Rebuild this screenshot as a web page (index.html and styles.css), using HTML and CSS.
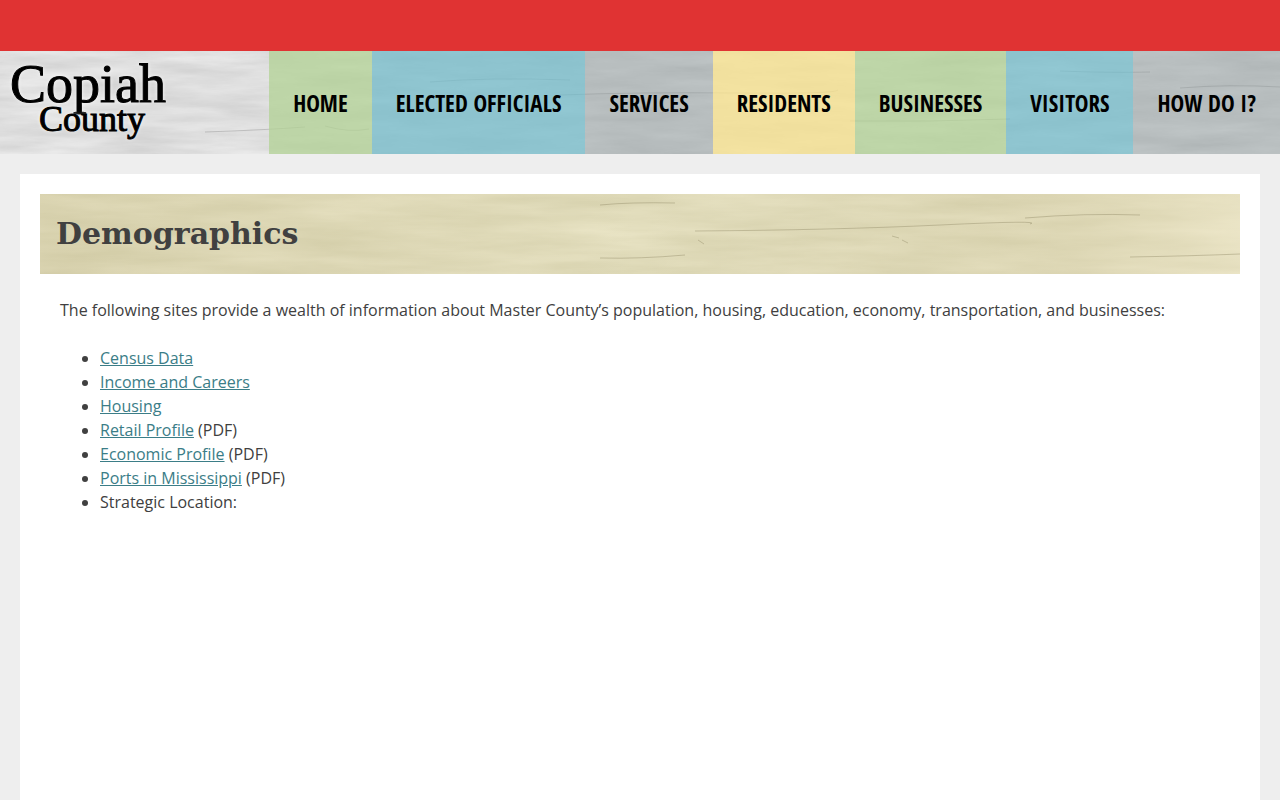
FILE: index.html
```
<!DOCTYPE html>
<html lang="en">
<head>
    <meta charset="UTF-8">
    <meta name="viewport" content="width=device-width, initial-scale=1.0">
    <title>Demographics | Copiah County</title>
    <link rel="stylesheet" href="styles.css">
</head>
<body>
    <div class="top-bar"></div>

    <header class="site-header">
        <svg class="wood" aria-hidden="true">
            <filter id="grain" x="0" y="0" width="100%" height="100%" color-interpolation-filters="sRGB">
                <feTurbulence type="fractalNoise" baseFrequency="0.01 0.07" numOctaves="6" seed="7"/>
                <feColorMatrix values="0.16 0 0 0 0.79  0.16 0 0 0 0.79  0.16 0 0 0 0.79  0 0 0 0 1"/>
            </filter>
            <rect width="100%" height="100%" filter="url(#grain)"/>
            <g fill="none" stroke="#555" stroke-opacity="0.25">
                <path d="M205 81 q60 -2 100 -5 M325 75 q24 7 44 3 M560 44 q80 -3 178 -2 t100 -3 M850 70 q80 1 160 -2"/>
                <path d="M430 31 q60 -5 140 -2 M1060 20 q50 2 90 1 M1180 37 q50 -4 100 -1"/>
            </g>
        </svg>
        <a class="logo" href="#">
            <span class="logo-name">Copiah</span>
            <span class="logo-type">County</span>
        </a>
        <nav class="main-nav">
            <a class="green" href="#">Home</a>
            <a class="blue" href="#">Elected Officials</a>
            <a class="gray" href="#">Services</a>
            <a class="yellow" href="#">Residents</a>
            <a class="green" href="#">Businesses</a>
            <a class="blue" href="#">Visitors</a>
            <a class="gray" href="#">How Do I?</a>
        </nav>
    </header>

    <main class="content">
        <div class="banner">
            <svg class="wood" aria-hidden="true">
                <filter id="grain-tan" x="0" y="0" width="100%" height="100%" color-interpolation-filters="sRGB">
                    <feTurbulence type="fractalNoise" baseFrequency="0.008 0.07" numOctaves="6" seed="12"/>
                    <feColorMatrix values="0.08 0 0 0 0.84  0.08 0 0 0 0.82  0.1 0 0 0 0.68  0 0 0 0 1"/>
                </filter>
                <linearGradient id="shade">
                    <stop offset="0" stop-color="#b8ad80" stop-opacity="0.2"/>
                    <stop offset="0.5" stop-color="#b8ad80" stop-opacity="0"/>
                    <stop offset="0.72" stop-color="#b8ad80" stop-opacity="0.1"/>
                    <stop offset="1" stop-color="#f4ecd0" stop-opacity="0.4"/>
                </linearGradient>
                <rect width="100%" height="100%" filter="url(#grain-tan)"/>
                <rect width="100%" height="100%" fill="url(#shade)"/>
                <g fill="none" stroke="#8d8461" stroke-opacity="0.4">
                    <path d="M655 37 q140 -1 245 -6 t90 -1 M985 24 q60 -5 115 -3 M560 11 q30 -3 75 -2 M560 64 q40 1 85 -3 M1090 63 q60 -1 110 -3"/>
                    <path d="M658 46 l6 4 M852 42 l7 2 M862 46 l6 3"/>
                </g>
            </svg>
            <h1>Demographics</h1>
        </div>

        <div class="text">
            <p>The following sites provide a wealth of information about Master County’s population, housing, education, economy, transportation, and businesses:</p>
            <ul>
                <li><a href="#">Census Data</a></li>
                <li><a href="#">Income and Careers</a></li>
                <li><a href="#">Housing</a></li>
                <li><a href="#">Retail Profile</a> (PDF)</li>
                <li><a href="#">Economic Profile</a> (PDF)</li>
                <li><a href="#">Ports in Mississippi</a> (PDF)</li>
                <li>Strategic Location:</li>
            </ul>
        </div>
    </main>
</body>
</html>
```
FILE: styles.css
```
* {
    box-sizing: border-box;
}
body {
    margin: 0;
    min-height: 100vh;
    display: flex;
    flex-direction: column;
    background-color: #eee;
    color: #404040;
    font-family: "Open Sans", sans-serif;
    font-size: 16px;
    line-height: 24px;
}
.top-bar {
    height: 51px;
    background-color: #e03333;
}

/* Wood background behind the header and the title */
.wood {
    position: absolute;
    top: 0;
    left: 0;
    width: 100%;
    height: 100%;
    z-index: -1;
}

.site-header {
    position: relative;
    z-index: 0;
    display: flex;
    justify-content: space-between;
    min-height: 103px;
}
.logo {
    display: flex;
    flex-direction: column;
    padding: 8px 0 0 10px;
    color: #000;
    font-family: "Liberation Serif", serif;
    text-decoration: none;
    text-shadow: 0 0 4px #fff;
    -webkit-text-stroke: 1px #000;
}
.logo-name {
    font-size: 54px;
    line-height: 50px;
}
.logo-type {
    padding-left: 29px;
    font-size: 36px;
    line-height: 20px;
}
.main-nav {
    display: flex;
}
.main-nav a {
    display: flex;
    align-items: center;
    padding: 0 24px;
    color: #000;
    font-family: "Open Sans Condensed", "Open Sans", sans-serif;
    font-size: 23px;
    font-weight: 600;
    text-decoration: none;
    text-transform: uppercase;
    white-space: nowrap;
}
.green { background-color: rgba(178, 209, 148, 0.75); }
.blue { background-color: rgba(115, 187, 201, 0.75); }
.gray { background-color: rgba(142, 154, 156, 0.48); }
.yellow { background-color: rgba(246, 225, 143, 0.8); }

.content {
    flex: 1;
    margin: 20px 20px 0;
    padding: 20px;
    background-color: #fff;
}
.banner {
    position: relative;
    z-index: 0;
    padding: 20px 16px;
}
.banner h1 {
    margin: 0;
    font-family: "DejaVu Serif", serif;
    font-size: 30px;
    line-height: 40px;
}
.text {
    padding: 24px 20px;
}
.text p {
    margin: 0 0 24px;
}
.text ul {
    margin: 0;
    padding-left: 40px;
}
.text a {
    color: #3b7d87;
}
```
